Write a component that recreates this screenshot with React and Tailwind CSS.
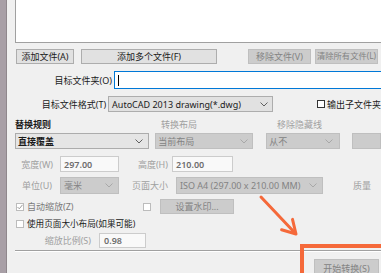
import React from 'react';

const Chevron = ({ color = '#606060' }) => (
  <svg width="8" height="5" viewBox="0 0 8 5" className="shrink-0">
    <polyline points="0.5,0.5 4,4 7.5,0.5" fill="none" stroke={color} strokeWidth="1" />
  </svg>
);

const Box = ({ checked, disabled }) => (
  <div className={`w-[8px] h-[8px] shrink-0 border bg-white flex items-center justify-center ${disabled ? 'border-[#bcbcbc]' : 'border-[#333333]'}`}>
    {checked && (
      <svg width="6" height="6" viewBox="0 0 6 6">
        <polyline points="0.5,3 2.3,4.8 5.5,0.8" fill="none" stroke="#9a9a9a" strokeWidth="1" />
      </svg>
    )}
  </div>
);

export default function App() {
  return (
    <div className="relative w-[381px] h-[273px] overflow-hidden flex bg-[#f0f0f0] text-[9px] leading-none text-[#1a1a1a] font-['Noto_Sans','Noto_Sans_CJK_SC',sans-serif]">
      <div className="w-[7px] shrink-0 bg-[#a89fa6] border-r border-[#8f878c]" />

      <div className="flex-1 min-w-0 pl-[8px] flex flex-col">
        {/* file list */}
        <div className="h-[43px] shrink-0 bg-white border-l border-b border-[#a0a0a0] -mr-[4px]" />

        {/* buttons */}
        <div className="mt-[6px] h-[15px] flex shrink-0 whitespace-nowrap">
          <div className="ml-[1px] w-[58px] bg-[#e1e1e1] border border-[#adadad] flex items-center justify-center">添加文件(A)</div>
          <div className="ml-[7px] w-[136px] bg-[#e1e1e1] border border-[#adadad] flex items-center justify-center">添加多个文件(F)</div>
          <div className="ml-[31px] w-[63px] bg-[#cccccc] border border-[#bfbfbf] text-[#838383] flex items-center justify-center">移除文件(V)</div>
          <div className="ml-[4px] w-[63px] bg-[#cccccc] border border-[#bfbfbf] text-[#838383] text-[8.3px] flex items-center justify-center">清除所有文件(L)</div>
        </div>

        {/* folder */}
        <div className="mt-[7px] h-[18px] flex items-center shrink-0">
          <div className="w-[97px] text-right">目标文件夹(O)</div>
          <div className="ml-[2px] flex-1 h-full -mr-[6px] bg-white border border-[#0078d7] flex items-center pl-[3px]">
            <div className="w-px h-[11px] bg-black" />
          </div>
        </div>

        {/* format */}
        <div className="mt-[7px] h-[16px] flex items-center shrink-0">
          <div className="w-[97px] text-right">目标文件格式(T)</div>
          <div className="ml-[2px] w-[175px] h-full bg-[#e1e1e1] border border-[#adadad] flex items-center justify-between pl-[3px] pr-[4px]">
            <span>AutoCAD 2013 drawing(*.dwg)</span>
            <Chevron />
          </div>
          <div className="ml-[44px] flex items-center whitespace-nowrap">
            <Box />
            <span className="ml-[2px]">输出子文件夹</span>
          </div>
        </div>

        {/* group labels */}
        <div className="mt-[6px] h-[12px] flex items-center shrink-0">
          <div className="w-[146px] font-bold">替换规则</div>
          <div className="w-[116px] text-[#a0a0a0]">转换布局</div>
          <div className="text-[#a0a0a0]">移除隐藏线</div>
        </div>

        {/* selects */}
        <div className="mt-[3px] h-[16px] flex shrink-0">
          <div className="w-[140px] bg-[#e5e5e5] border border-[#acacac] flex items-center justify-between pl-[2px] pr-[5px] font-bold">
            <span>直接覆盖</span>
            <Chevron />
          </div>
          <div className="ml-[6px] w-[102px] bg-[#cccccc] border border-[#bfbfbf] text-[#838383] flex items-center justify-between pl-[2px] pr-[4px]">
            <span>当前布局</span>
            <Chevron color="#a8a8a8" />
          </div>
          <div className="ml-[13px] w-[77px] bg-[#cccccc] border border-[#bfbfbf] text-[#838383] flex items-center justify-between pl-[2px] pr-[6px]">
            <span>从不</span>
            <Chevron color="#a8a8a8" />
          </div>
          <div className="ml-[12px] w-[30px] bg-[#cccccc] border border-[#bfbfbf]" />
        </div>

        {/* width / height */}
        <div className="mt-[7px] h-[16px] flex items-center shrink-0">
          <div className="w-[38px] text-right text-[#a0a0a0]">宽度(W)</div>
          <div className="ml-[7px] w-[59px] h-full bg-[#f9f9f9] border border-[#cccccc] flex items-center pl-[3px] text-[#6d6d6d] font-semibold">297.00</div>
          <div className="w-[49px] text-right text-[#a0a0a0]">高度(H)</div>
          <div className="ml-[4px] w-[61px] h-full bg-[#f9f9f9] border border-[#cccccc] flex items-center pl-[3px] text-[#6d6d6d] font-semibold">210.00</div>
        </div>

        {/* unit / page size */}
        <div className="mt-[5px] h-[17px] flex items-center shrink-0">
          <div className="w-[37px] text-right text-[#a0a0a0]">单位(U)</div>
          <div className="ml-[8px] w-[59px] h-full bg-[#cccccc] border border-[#bfbfbf] text-[#838383] flex items-center justify-between pl-[3px] pr-[5px]">
            <span>毫米</span>
            <Chevron color="#a8a8a8" />
          </div>
          <div className="w-[49px] text-right text-[#a0a0a0]">页面大小</div>
          <div className="ml-[8px] w-[147px] h-full bg-[#cccccc] border border-[#bfbfbf] text-[#838383] flex items-center justify-between pl-[3px] pr-[5px] whitespace-nowrap">
            <span>ISO A4 (297.00 x 210.00 MM)</span>
            <Chevron color="#a8a8a8" />
          </div>
          <div className="ml-[30px] text-[#a0a0a0]">质量</div>
        </div>

        {/* autoscale */}
        <div className="mt-[5px] h-[15px] flex items-center shrink-0">
          <div className="w-[128px] flex items-center pl-[1px]">
            <Box checked disabled />
            <span className="ml-[3px] text-[#7a7a7a]">自动缩放(Z)</span>
          </div>
          <Box disabled />
          <div className="ml-[9px] w-[74px] h-full bg-[#cccccc] border border-[#bfbfbf] text-[#838383] flex items-center justify-center">设置水印...</div>
        </div>

        {/* use page layout */}
        <div className="mt-[4px] h-[12px] flex items-center pl-[1px] shrink-0">
          <Box disabled />
          <span className="ml-[3px] text-[8.6px]">使用页面大小布局(如果可能)</span>
        </div>

        {/* scale */}
        <div className="mt-[3px] h-[15px] flex items-center shrink-0">
          <div className="w-[78px] text-right pr-[2px] text-[#a0a0a0]">缩放比例(S)</div>
          <div className="ml-[6px] w-[47px] h-full bg-[#f9f9f9] border border-[#cccccc] flex items-center pl-[4px] text-[#6d6d6d] font-semibold">0.98</div>
        </div>

        {/* separator */}
        <div className="mt-[2px] h-[2px] shrink-0 border-t border-[#a0a0a0] border-b border-b-white" />

        {/* start */}
        <div className="mt-[7px] h-[18px] flex shrink-0">
          <div className="ml-[299px] w-[65px] bg-[#cccccc] border border-[#bfbfbf] text-[#838383] flex items-center justify-center whitespace-nowrap">开始转换(S)</div>
        </div>
      </div>

      {/* annotation */}
      <div className="absolute left-[300px] top-[244px] w-[100px] h-[50px] border-4 border-[#f5693a]" />
      <svg className="absolute left-0 top-0 pointer-events-none" width="381" height="273">
        <line x1="261" y1="197" x2="295" y2="233" stroke="#f5693a" strokeWidth="3" strokeLinecap="round" />
        <polyline points="281.6,229.7 296,234 292.5,219.4" fill="none" stroke="#f5693a" strokeWidth="3" strokeLinecap="round" strokeLinejoin="round" />
      </svg>
    </div>
  );
}
